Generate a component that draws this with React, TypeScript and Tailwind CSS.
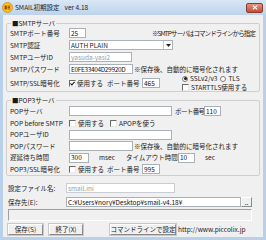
import React from "react";

const Box = ({ w, children, gray, className = "" }: { w: string; children?: React.ReactNode; gray?: boolean; className?: string }) => (
  <div className={`${w} h-[10px] bg-white border border-[#a9b0b8] flex items-center px-[1px] overflow-hidden whitespace-nowrap ${gray ? "text-[#9a9a9a]" : "text-[#111]"} ${className}`}>
    {children}
  </div>
);

const Check = ({ checked }: { checked?: boolean }) => (
  <span className="w-[7px] h-[7px] shrink-0 border border-t-[#6a6a6a] border-l-[#6a6a6a] border-b-[#e8e8e8] border-r-[#e8e8e8] bg-white flex items-center justify-center">
    {checked && (
      <svg width="5" height="5" viewBox="0 0 5 5">
        <path d="M0.4 2.4 L1.9 3.9 L4.6 0.8" stroke="#1a1a1a" strokeWidth="1.1" fill="none" />
      </svg>
    )}
  </span>
);

const Radio = ({ on }: { on?: boolean }) => (
  <span className="w-[6px] h-[6px] shrink-0 rounded-full border border-[#7a7a7a] bg-white flex items-center justify-center">
    {on && <span className="w-[3px] h-[3px] rounded-full bg-[#1a1a1a]" />}
  </span>
);

const Btn = ({ w, children }: { w: string; children: React.ReactNode }) => (
  <div className={`${w} h-[11px] bg-[#f0f0f0] border border-t-white border-l-white border-b-[#8a8a8a] border-r-[#8a8a8a] shadow-[0_0_0_1px_#c8c8c8] flex items-center justify-center whitespace-nowrap`}>
    {children}
  </div>
);

const Row = ({ h = "h-[12px]", children }: { h?: string; children: React.ReactNode }) => (
  <div className={`${h} flex items-center whitespace-nowrap`}>{children}</div>
);

const Label = ({ children, w = "w-[59px]" }: { children: React.ReactNode; w?: string }) => (
  <span className={`${w} shrink-0`}>{children}</span>
);

export default function App() {
  return (
    <div className="w-[266px] h-[240px] bg-[#b8d0ea] flex flex-col font-['Noto_Sans_CJK_JP',sans-serif] text-[6.5px] leading-none text-[#1a1a1a] overflow-hidden">
      {/* title bar */}
      <div className="h-[15px] shrink-0 bg-gradient-to-b from-[#d9e7f6] to-[#bdd3ec] flex items-center pl-[2px] pr-[3px]">
        <svg width="11" height="11" viewBox="0 0 11 11" className="shrink-0">
          <circle cx="5.5" cy="5.5" r="5" fill="#f6c61c" stroke="#d48a10" strokeWidth="0.8" />
          <rect x="2.6" y="3.6" width="2.2" height="3.8" fill="#b03a10" />
          <rect x="5.6" y="3.6" width="2.8" height="1" fill="#b03a10" />
          <rect x="5.6" y="5.1" width="2.4" height="0.9" fill="#b03a10" />
          <rect x="5.6" y="6.5" width="2.8" height="0.9" fill="#b03a10" />
        </svg>
        <span className="ml-[2px] text-[#222]">SMAIL初期設定</span>
        <span className="ml-[5px] text-[#222]">ver 4.18</span>
        <div className="flex-1" />
        <div className="w-[17px] h-[10px] rounded-[2px] border border-[#8a3c30] bg-gradient-to-b from-[#e3927f] to-[#c44c36] flex items-center justify-center">
          <svg width="6" height="5" viewBox="0 0 6 5">
            <path d="M0.8 0.6 L5.2 4.4 M5.2 0.6 L0.8 4.4" stroke="white" strokeWidth="1.2" />
          </svg>
        </div>
      </div>

      {/* body */}
      <div className="flex-1 mx-[3px] mb-[3px] bg-[#f0f0f0] pt-[4px] flex flex-col">
        <fieldset className="mx-[3px] border border-[#cfcfcf] rounded-[2px] px-[3px]">
          <legend className="leading-[8px] h-[8px] ml-[1px] px-[1px]">■SMTPサーバ</legend>
          <Row>
            <Label>SMTPポート番号</Label>
            <Box w="w-[17px]">25</Box>
            <div className="flex-1" />
            <span className="tracking-[-0.9px] mr-[1px]">※SMTPサーバはコマンドラインから指定</span>
          </Row>
          <Row>
            <Label>SMTP認証</Label>
            <div className="w-[104px] h-[10px] bg-white border border-[#a9b0b8] flex items-center pl-[1px]">
              <span className="flex-1">AUTH PLAIN</span>
              <div className="w-[9px] h-[8px] border-l border-[#c8c8c8] flex items-center justify-center">
                <svg width="5" height="3" viewBox="0 0 5 3"><path d="M0 0 L5 0 L2.5 3 Z" fill="#222" /></svg>
              </div>
            </div>
          </Row>
          <Row>
            <Label>SMTPユーザID</Label>
            <Box w="w-[63px]" gray>yasuda-yasi2</Box>
          </Row>
          <Row>
            <Label>SMTPパスワード</Label>
            <Box w="w-[64px]" className="tracking-[-0.35px]">E0FE33404D29920D</Box>
            <span className="ml-[1px]">※保存後、自動的に暗号化されます</span>
          </Row>
          <Row h="h-[16px]">
            <Label>SMTP/SSL暗号化</Label>
            <div className="w-[38px] flex items-center shrink-0">
              <Check checked />
              <span className="ml-[1px]">使用する</span>
            </div>
            <span className="w-[35px] shrink-0">ポート番号</span>
            <Box w="w-[18px]">465</Box>
            <div className="w-[22px] shrink-0" />
            <div className="flex flex-col gap-[2px]">
              <div className="flex items-center h-[7px]">
                <Radio on />
                <span className="ml-[2px]">SSLv2/v3</span>
                <span className="ml-[3px]"><Radio /></span>
                <span className="ml-[2px]">TLS</span>
              </div>
              <div className="flex items-center h-[7px]">
                <Check />
                <span className="ml-[2px]">STARTTLS使用する</span>
              </div>
            </div>
          </Row>
        </fieldset>

        <fieldset className="mx-[3px] mt-[4px] border border-[#cfcfcf] rounded-[2px] px-[3px] pt-[1px]">
          <legend className="leading-[8px] h-[8px] ml-[1px] px-[1px]">■POP3サーバ</legend>
          <Row>
            <Label>POPサーバ</Label>
            <Box w="w-[103px]" />
            <span className="w-[32px] pl-[3px] shrink-0 tracking-[-0.6px]">ポート番号</span>
            <Box w="w-[17px]">110</Box>
          </Row>
          <Row>
            <Label>POP before SMTP</Label>
            <div className="w-[41px] flex items-center shrink-0">
              <Check />
              <span className="ml-[2px]">使用する</span>
            </div>
            <Check />
            <span className="ml-[2px]">APOPを使う</span>
          </Row>
          <Row h="h-[11px]">
            <Label>POPユーザID</Label>
            <Box w="w-[103px]" />
          </Row>
          <Row>
            <Label>POPパスワード</Label>
            <Box w="w-[64px]" />
            <span className="ml-[1px]">※保存後、自動的に暗号化されます</span>
          </Row>
          <Row h="h-[11px]">
            <Label>遅延待ち時間</Label>
            <Box w="w-[20px]">300</Box>
            <span className="w-[37px] pl-[10px] shrink-0">msec</span>
            <span className="w-[52px] shrink-0">タイムアウト時間</span>
            <Box w="w-[17px]">10</Box>
            <span className="pl-[10px]">sec</span>
          </Row>
          <Row>
            <Label>POP3/SSL暗号化</Label>
            <div className="w-[38px] flex items-center shrink-0">
              <Check />
              <span className="ml-[2px]">使用する</span>
            </div>
            <span className="w-[35px] shrink-0">ポート番号</span>
            <Box w="w-[18px]">995</Box>
          </Row>
        </fieldset>

        <div className="px-[5px] flex flex-col">
          <Row h="h-[12px] mt-[6px]">
            <Label w="w-[58px]">設定ファイル名:</Label>
            <Box w="w-[109px]" gray className="border-[#c9ced4]">smail.ini</Box>
          </Row>
          <Row h="h-[12px] mt-[2px]">
            <Label w="w-[58px]">保存先(E):</Label>
            <Box w="w-[175px]">C:¥Users¥nory¥Desktop¥smail-v4.18¥</Box>
            <div className="w-[11px] h-[10px] border border-t-white border-l-white border-b-[#8a8a8a] border-r-[#8a8a8a] flex items-end justify-center pb-[1px]">
              <span className="leading-none">..</span>
            </div>
          </Row>
          <div className="mt-[1px] h-[12px] w-[244px] border border-t-[#a0a0a0] border-l-[#a0a0a0] border-b-white border-r-white" />
          <Row h="h-[12px] mt-[2px]">
            <Btn w="w-[35px]">保存(S)</Btn>
            <div className="w-[6px]" />
            <Btn w="w-[34px]">終了(X)</Btn>
            <div className="w-[27px]" />
            <Btn w="w-[66px]">コマンドラインで設定</Btn>
            <span className="ml-[2px]">http://www.piccolix.jp</span>
          </Row>
        </div>
      </div>
    </div>
  );
}
